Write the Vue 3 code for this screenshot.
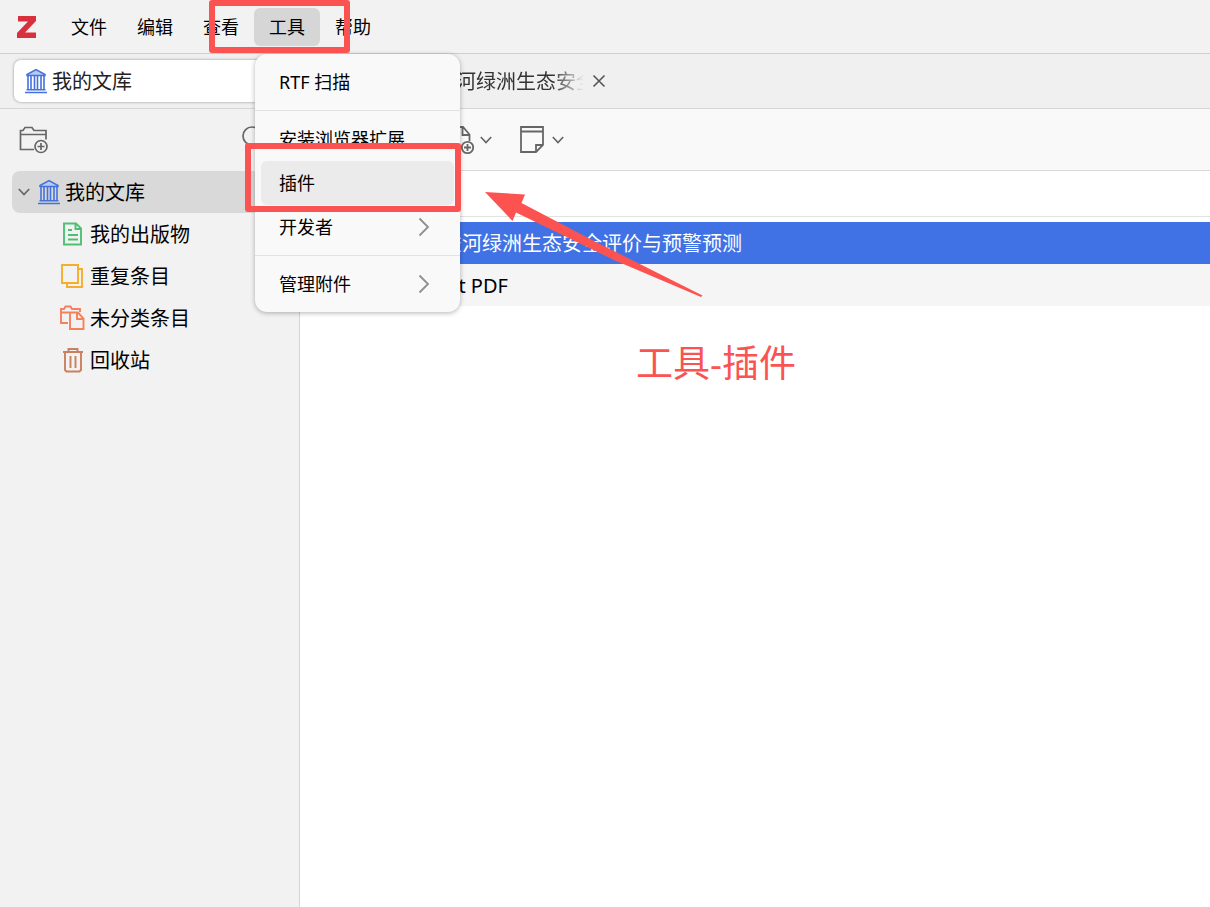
<template>
  <div class="app">
    <header class="menu_bar">
      <svg class="logo" viewBox="0 0 20 22">
        <path d="M1 0h18v5L8 16.500h11V22H0v-5L11 5.500H1z" fill="#d9303e" />
      </svg>
      <nav class="menus">
        <div class="menu" v-for="menu in menus" :key="menu">
          <button class="menu_btn" :class="{ active: menu === openMenu }" @click="openMenu = menu">{{ menu }}</button>
          <div class="popup" v-if="menu === '工具' && openMenu === menu">
            <div class="popup_group" v-for="(group, i) in toolItems" :key="i">
              <button class="popup_item" :class="{ hovered: item.hovered }" v-for="item in group" :key="item.label">
                <span>{{ item.label }}</span>
                <svg v-if="item.sub" width="12" height="20" viewBox="0 0 12 20">
                  <path d="M1.500 1.500L10 10l-8.500 8.500" fill="none" stroke="#8f8f8f" stroke-width="1.800" />
                </svg>
              </button>
            </div>
          </div>
        </div>
      </nav>
    </header>

    <div class="tab_bar">
      <button class="tab selected">
        <svg class="library_icon" width="24" height="26" viewBox="0 0 24 26"><use href="#library" /></svg>
        <span>我的文库</span>
      </button>
      <div class="tab">
        <svg width="20" height="24" viewBox="0 0 20 24">
          <path d="M2 1h10l6 6v16H2zM12 1v6h6" fill="none" stroke="#666" stroke-width="1.500" />
        </svg>
        <span class="tab_title">{{ title }}</span>
        <button class="close" aria-label="关闭">
          <svg width="14" height="14" viewBox="0 0 14 14">
            <path d="M1.500 1.500l11 11M12.500 1.500l-11 11" stroke="#555" stroke-width="1.600" />
          </svg>
        </button>
      </div>
    </div>

    <div class="body">
      <aside class="sidebar">
        <div class="sidebar_tools">
          <button aria-label="新建分类">
            <svg width="30" height="28" viewBox="0 0 30 28" fill="none" stroke="#666" stroke-width="1.700">
              <path d="M15 23.500H1.500V4.500H4L6 1.500h7l2 3h12v9M1.500 8.500H27" />
              <circle cx="22" cy="20.500" r="6" />
              <path d="M22 17v7M18.500 20.500h7" />
            </svg>
          </button>
          <button aria-label="搜索">
            <svg width="28" height="28" viewBox="0 0 28 28" fill="none" stroke="#666" stroke-width="1.700">
              <circle cx="10" cy="10" r="9" />
              <path d="M16.500 16.500l9 9" />
            </svg>
          </button>
        </div>
        <ul class="tree">
          <li class="tree_row root">
            <svg width="12" height="8" viewBox="0 0 12 8">
              <path d="M.8 1L6 6.500 11.200 1" fill="none" stroke="#666" stroke-width="1.700" />
            </svg>
            <svg class="library_icon" width="24" height="26" viewBox="0 0 24 26"><use href="#library" /></svg>
            <span>我的文库</span>
          </li>
          <li class="tree_row child" v-for="row in rows" :key="row.label">
            <svg width="26" height="26" viewBox="0 0 26 26" fill="none" stroke-width="1.900" :stroke="row.color">
              <path :d="row.back" v-if="row.back" />
              <path :d="row.icon" />
            </svg>
            <span>{{ row.label }}</span>
          </li>
        </ul>
      </aside>

      <main class="items">
        <div class="toolbar">
          <button v-for="tool in tools" :key="tool.label" :aria-label="tool.label">
            <svg width="26" height="30" viewBox="0 0 26 30" fill="none" stroke="#666" stroke-width="1.800">
              <path :d="tool.icon" />
            </svg>
            <svg width="12" height="8" viewBox="0 0 12 8">
              <path d="M.8 1L6 6.500 11.200 1" fill="none" stroke="#666" stroke-width="1.700" />
            </svg>
          </button>
        </div>
        <div class="columns"></div>
        <ul class="item_list">
          <li class="item current">{{ title }}</li>
          <li class="item attachment">Full Text PDF</li>
        </ul>
      </main>
    </div>

    <div class="mark mark_menu"></div>
    <div class="mark mark_plugin"></div>
    <svg class="arrow" width="220" height="108" viewBox="0 0 220 108">
      <path d="M1 2L41 4.500 37.500 13 110 51 218.500 105.500 217 107 130 70 32 22.500 28.500 31z" fill="#fc5351" />
    </svg>
    <p class="note">工具-插件</p>

    <svg class="symbols" aria-hidden="true">
      <symbol id="library" viewBox="0 0 24 26">
        <path d="M3 7.500V6.500L12 1.500l9 5V7.500z" fill="#b9cbf3" stroke="#4472dc" stroke-width="1.500" />
        <path d="M4 8v14M7 8v14M10.500 8v14M13.500 8v14M17 8v14M20 8v14M2.500 21.800h19M1 24.500h22" fill="none" stroke="#4472dc" stroke-width="1.600" />
      </symbol>
    </svg>
  </div>
</template>

<script setup>
import { ref } from 'vue'

const menus = ['文件', '编辑', '查看', '工具', '帮助']
const openMenu = ref('工具')
const toolItems = [
  [{ label: 'RTF 扫描' }],
  [{ label: '安装浏览器扩展' }, { label: '插件', hovered: true }, { label: '开发者', sub: true }],
  [{ label: '管理附件', sub: true }],
]

const title = '开都—孔雀河绿洲生态安全评价与预警预测'

const rows = [
  {
    label: '我的出版物',
    color: '#4fbf73',
    icon: 'M4 2.500h12l5 5V23.500H4zM15.500 2.500v5.500H21M8 9h4M8 14h10M8 18.500h10',
  },
  {
    label: '重复条目',
    color: '#f5ae2c',
    back: 'M18 6h4v18H7v-4',
    icon: 'M2 2h16v18H2z',
  },
  {
    label: '未分类条目',
    color: '#f5805c',
    back: 'M8 18H1V4h3l1.500-2.500h5L12 4h8v3M1 7.500h8',
    icon: 'M10 7.500h8l5.500 6V24H10zM17 7.500v6.500h6.500',
  },
  {
    label: '回收站',
    color: '#c9805f',
    icon: 'M3 5h20M8.500 5V2h9v3M5 5v18l1.500 1.500h13L21 23V5M10.500 9v12M15.500 9v12',
  },
]

// 工具栏图标
const tools = [
  { label: '新建条目', icon: 'M13 3a12 12 0 1 0 .1 0M13 9v12M7 15h12' },
  { label: '添加附件', icon: 'M12 27H3V2h12l6.500 7.500V16M14.500 2v8h7M25.200 22.500a5.700 5.700 0 1 0-11.400 0a5.700 5.700 0 1 0 11.400 0M19.500 19v7M16 22.500h7' },
  { label: '新建笔记', icon: 'M1 2h22v18l-7 7H1zM1 6.500h22M23 20h-7v7' },
]
</script>

<style>
body {
  margin: 0;
  background: #fff;
}
</style>

<style scoped>
.app {
  position: relative;
  display: flex;
  flex-direction: column;
  min-height: 100vh;
  overflow: hidden;
  font-family: "Noto Sans", "Noto Sans CJK SC", sans-serif;
  font-size: 20px;
  line-height: 28px;
  color: #000;
}
button {
  display: flex;
  align-items: center;
  margin: 0;
  padding: 0;
  border: none;
  background: none;
  font: inherit;
  color: inherit;
}
svg {
  flex: none;
}
ul {
  margin: 0;
  padding: 0;
  list-style: none;
}
.menu_bar {
  display: flex;
  align-items: center;
  height: 53px;
  padding-left: 17px;
  border-bottom: 1px solid #cfcfcf;
  background: #f2f2f2;
  font-size: 18px;
}
.logo {
  width: 20px;
  height: 22px;
  margin-right: 19px;
}
.menus {
  display: flex;
}
.menu {
  position: relative;
}
.menu_btn {
  justify-content: center;
  width: 66px;
  height: 38px;
  border-radius: 6px;
}
.menu_btn.active {
  background: #d6d6d6;
}
.popup {
  position: absolute;
  z-index: 2;
  top: 46px;
  left: 1px;
  width: 205px;
  border-radius: 12px;
  background: #f9f9f9;
  box-shadow: 0 1px 5px rgba(0, 0, 0, 0.3);
}
.popup_group {
  padding: 6px;
}
.popup_group + .popup_group {
  border-top: 1px solid #e2e2e2;
}
.popup_item {
  justify-content: space-between;
  width: 100%;
  height: 44px;
  padding: 0 24px 0 18px;
  border-radius: 6px;
}
.popup_item.hovered {
  background: #ebebeb;
}
.tab_bar {
  display: flex;
  align-items: center;
  gap: 4px;
  height: 54px;
  padding: 0 14px;
  border-bottom: 1px solid #d5d5d5;
  background: #f0f0f0;
}
.tab {
  display: flex;
  align-items: center;
  gap: 8px;
  height: 42px;
  padding: 0 10px;
  color: #333;
}
.tab span {
  padding-top: 2px;
}
.tab.selected {
  gap: 4px;
  width: 300px;
  border-radius: 7px;
  background: #fff;
  box-shadow: 0 0 3px rgba(0, 0, 0, 0.4);
  color: #222;
}
.tab_title {
  width: 228px;
  overflow: hidden;
  white-space: nowrap;
  mask-image: linear-gradient(to left, transparent, #000 32px);
}
.body {
  display: flex;
  flex: 1;
}
.sidebar {
  flex: none;
  width: 299px;
  border-right: 1px solid #d5d5d5;
  background: #f2f2f2;
}
.sidebar_tools {
  display: flex;
  justify-content: space-between;
  align-items: center;
  height: 62px;
  padding: 0 29px 0 19px;
}
.tree {
  padding: 0 12px;
}
.tree_row {
  display: flex;
  align-items: center;
  gap: 4px;
  height: 42px;
}
.tree_row span {
  padding-top: 2px;
}
.tree_row.root {
  padding-left: 6px;
  border-radius: 8px;
  background: #d9d9d9;
}
.root .library_icon {
  margin-left: 3px;
}
.tree_row.child {
  padding-left: 48px;
}
.items {
  flex: 1;
  min-width: 0;
  background: #fff;
}
.toolbar {
  display: flex;
  align-items: center;
  gap: 28px;
  height: 61px;
  padding-left: 76px;
  border-bottom: 1px solid #d9d9d9;
  background: #f9f9f9;
}
.toolbar button {
  gap: 6px;
}
.columns {
  height: 45px;
  border-bottom: 1px solid #e2e2e2;
}
.item_list {
  padding-top: 5px;
}
.item {
  height: 42px;
  padding-left: 62px;
  line-height: 44px;
  white-space: nowrap;
}
.item.current {
  background: #4072e5;
  color: #fff;
}
.item.attachment {
  padding-left: 89px;
  background: #f5f5f5;
}
.mark {
  position: absolute;
  z-index: 3;
  box-sizing: border-box;
  border: 6px solid #fb5352;
  border-radius: 3px;
  pointer-events: none;
}
.mark_menu {
  top: 0;
  left: 209px;
  width: 141px;
  height: 53px;
}
.mark_plugin {
  top: 143px;
  left: 245px;
  width: 216px;
  height: 69px;
}
.arrow {
  position: absolute;
  z-index: 3;
  top: 190px;
  left: 484px;
  pointer-events: none;
}
.note {
  position: absolute;
  z-index: 3;
  top: 336px;
  left: 636px;
  margin: 0;
  font-size: 37px;
  line-height: 54px;
  color: #fb5352;
}
.symbols {
  position: absolute;
  width: 0;
  height: 0;
}
</style>
